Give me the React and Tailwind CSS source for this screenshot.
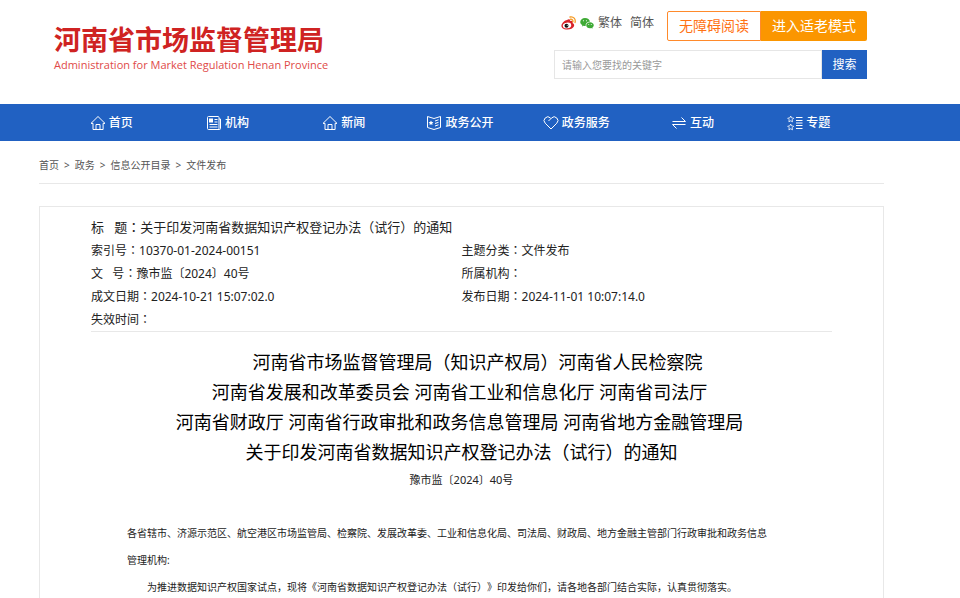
const HomeIcon = () => (
  <svg className="size-4" viewBox="0 0 16 16" fill="none" stroke="currentColor" strokeWidth="1">
    <path d="M1 8.400 8 1.500l7 6.900H13.100v6.100H3V8.400H1Z" strokeLinejoin="round" />
    <path d="M6 14.500V9.500h4v5" />
  </svg>
);

const NewspaperIcon = () => (
  <svg className="size-4" viewBox="0 0 16 16" fill="none" stroke="currentColor" strokeWidth="1">
    <rect x="1.500" y="1.500" width="11.500" height="13" rx="1" />
    <path d="M13 4h1.500v9.500a1 1 0 0 1-1 1H12M8.500 4.500h3M8.500 7h3M3.500 9.500h8M3.500 12h8" />
    <rect x="3.500" y="4" width="3" height="3" fill="currentColor" />
  </svg>
);

const BookIcon = () => (
  <svg className="size-4" viewBox="0 0 16 16" fill="none" stroke="currentColor" strokeWidth="1">
    <path d="M1.500 1.500 8 3.500l6.500-2v11L8 14.500l-6.500-2Z" />
    <path d="M9 6l3.500-1.200M9 8.500l3.500-1.200M9 11l3.500-1.200" />
    <path d="m5 5.500.8 1.500 1.600.2-1.200 1.200.3 1.700L5 9.300l-1.500.8.3-1.700-1.200-1.200L4.200 7Z" fill="currentColor" stroke="none" />
  </svg>
);

const HeartIcon = () => (
  <svg className="size-4" viewBox="0 0 16 16" fill="none" stroke="currentColor" strokeWidth="1">
    <path d="M8 14 2.200 8.200a3.700 3.700 0 0 1 0-5.200 3.700 3.700 0 0 1 5.300 0l.5.5.5-.5a3.700 3.700 0 0 1 5.300 0 3.700 3.700 0 0 1 0 5.200Z" />
    <path d="M8 3.500 5.500 6" />
  </svg>
);

const ArrowsIcon = () => (
  <svg className="size-4" viewBox="0 0 16 16" fill="none" stroke="currentColor" strokeWidth="1">
    <path d="M1.500 6.500h13L10.500 2.500M14.500 9.500h-13l4 4" />
  </svg>
);

const StarListIcon = () => (
  <svg className="size-4" viewBox="0 0 16 16" fill="none" stroke="currentColor" strokeWidth="1">
    <path d="m3.700 1 .9 1.900 2.100.3-1.500 1.500.3 2.100-1.800-1-1.800 1 .3-2.100L.7 3.200l2.100-.3ZM3.700 9l.9 1.900 2.100.3-1.500 1.500.3 2.100-1.800-1-1.800 1 .3-2.100-1.500-1.500 2.100-.3Z" strokeWidth=".8" />
    <path d="M9 2.500h6.500M9 5.500h6.500M9 10.500h6.500M9 13.500h6.500M9 8h6.500" />
  </svg>
);

const WeiboIcon = () => (
  <svg className="h-[14px] w-[15px]" viewBox="0 0 30 28">
    <path d="M12 8c3-2 7-2 6 2 5-1 7 1 5 4 7 3 3 13-10 13C4 27 0 23 1 18c1-4 7-10 11-10Z" fill="#d8232a" />
    <ellipse cx="12" cy="19" rx="8.500" ry="5.800" fill="#fff" transform="rotate(-8 12 19)" />
    <circle cx="11" cy="19.500" r="4" fill="#111" />
    <circle cx="12.500" cy="18.500" r="1" fill="#fff" />
    <path d="M18 2c7-1.500 12 4 10 11M19 6.500c3.500-.5 5.500 2 4.700 5" fill="none" stroke="#f59a23" strokeWidth="2.600" strokeLinecap="round" />
  </svg>
);

const WechatIcon = () => (
  <svg className="h-[14px] w-[14px]" viewBox="0 0 28 28">
    <path d="M10 4c5.500 0 9.500 3.300 9.800 7.500-5.500 0-9.500 4-8.300 8.500-1.500.1-3-.1-4.300-.6L3.800 21l.9-3C2 16.500.5 14.300.5 11.800.5 7.500 4.700 4 10 4Z" fill="#3faa36" />
    <path d="M20 12.500c4.300 0 7.500 2.700 7.500 6 0 2-1.200 3.700-3 4.800l.6 2.200-2.600-1.300c-5.600 1.400-10-1.700-10-5.700 0-3.300 3.300-6 7.500-6Z" fill="#3faa36" />
    <g fill="#fff">
      <circle cx="7" cy="9.500" r="1.200" />
      <circle cx="13" cy="9.500" r="1.200" />
      <circle cx="17.500" cy="17" r="1" />
      <circle cx="22.500" cy="17" r="1" />
    </g>
  </svg>
);

const navItems = [
  { label: "首页", Icon: HomeIcon },
  { label: "机构", Icon: NewspaperIcon },
  { label: "新闻", Icon: HomeIcon },
  { label: "政务公开", Icon: BookIcon },
  { label: "政务服务", Icon: HeartIcon },
  { label: "互动", Icon: ArrowsIcon },
  { label: "专题", Icon: StarListIcon },
];

const crumbs = ["首页", "政务", "信息公开目录", "文件发布"];

const Field = ({ label, children }) => (
  <div className="flex">
    <dt className="whitespace-pre">
      {label}
      <span className="font-['Noto_Sans_CJK_TC',sans-serif] leading-none">：</span>
    </dt>
    <dd>{children}</dd>
  </div>
);

const Header = () => (
  <header className="flex h-[104px] items-start justify-between pl-[54px] pr-[93px]">
    <a href="#" className="mt-5 block text-[#cf2322]">
      <span className="block text-[27px] leading-[39px] font-bold">河南省市场监督管理局</span>
      <span className="block font-['Open_Sans',sans-serif] text-[11px] leading-3 text-[#e04a48]">
        Administration for Market Regulation Henan Province
      </span>
    </a>

    <div className="mt-[11px] w-[313px]">
      <div className="flex items-start justify-between">
        <div className="flex items-center pl-[7px] pt-1 text-xs text-[#555]">
          <a href="#" aria-label="微博"><WeiboIcon /></a>
          <a href="#" aria-label="微信" className="ml-1"><WechatIcon /></a>
          <a href="#" className="ml-1">繁体</a>
          <a href="#" className="ml-2">简体</a>
        </div>
        <div className="flex h-[30px] text-sm">
          <button type="button" className="rounded-l-xs border border-[#ff8a2b] px-[11px] text-[#ff7214]">
            无障碍阅读
          </button>
          <button type="button" className="rounded-r-xs bg-[#fb9600] px-[11px] text-white">
            进入适老模式
          </button>
        </div>
      </div>
      <form className="mt-[9px] flex h-[29px]" onSubmit={(e) => e.preventDefault()}>
        <input
          type="text"
          aria-label="搜索关键字"
          placeholder="请输入您要找的关键字"
          className="min-w-0 flex-1 border border-[#e6e6e6] px-[7px] pt-px text-[10px] outline-none placeholder:text-[#999]"
        />
        <button type="submit" className="w-[45px] bg-[#2161c2] pt-px text-xs text-white">
          搜索
        </button>
      </form>
    </div>
  </header>
);

const Nav = () => (
  <nav className="bg-[#2161c2] pl-[53px] pr-[93px]">
    <ul className="flex h-[37px]">
      {navItems.map(({ label, Icon }) => (
        <li key={label} className="flex-1">
          <a href="#" className="flex h-full items-center justify-center gap-[3px] text-xs font-medium text-white">
            <Icon />
            {label}
          </a>
        </li>
      ))}
    </ul>
  </nav>
);

const App = () => {
  return (
    <div className="h-screen overflow-hidden bg-white font-['Noto_Sans','Noto_Sans_CJK_SC',sans-serif] text-[#222] [text-spacing-trim:space-all]">
      <Header />
      <Nav />

      <main className="pl-[39px] pr-[76px]">
        <ol className="flex gap-[5px] border-b border-[#e8e8e8] pt-4 pb-[10px] text-[10px] leading-4 text-[#555]">
          {crumbs.map((crumb, i) => (
            <li key={crumb} className="flex gap-[5px]">
              {i > 0 && <span>&gt;</span>}
              <a href="#">{crumb}</a>
            </li>
          ))}
        </ol>

        <article className="mt-[22px] border border-[#e8e8e8] px-[51px] pt-2">
          <dl className="grid grid-cols-2 border-b border-[#e8e8e8] text-xs leading-[23px]">
            <div className="col-span-2 text-[13px] leading-6">
              <Field label="标   题">关于印发河南省数据知识产权登记办法（试行）的通知</Field>
            </div>
            <Field label="索引号">10370-01-2024-00151</Field>
            <Field label="主题分类">文件发布</Field>
            <Field label="文   号">豫市监〔2024〕40号</Field>
            <Field label="所属机构" />
            <Field label="成文日期">2024-10-21 15:07:02.0</Field>
            <Field label="发布日期">2024-11-01 10:07:14.0</Field>
            <Field label="失效时间" />
          </dl>

          <h1 className="mt-[15px] text-center text-lg leading-[30px] text-black">
            <span className="block pl-8">河南省市场监督管理局（知识产权局）河南省人民检察院</span>
            <span className="block pr-1">河南省发展和改革委员会 河南省工业和信息化厅 河南省司法厅</span>
            <span className="block pr-1">河南省财政厅 河南省行政审批和政务信息管理局 河南省地方金融管理局</span>
            <span className="block">关于印发河南省数据知识产权登记办法（试行）的通知</span>
          </h1>
          <p className="mt-[3px] text-center text-[11px] leading-5">豫市监〔2024〕40号</p>

          <div className="mt-[30px] px-9 text-[10px] leading-[27px]">
            <p>
              各省辖市、济源示范区、航空港区市场监管局、检察院、发展改革委、工业和信息化局、司法局、财政局、地方金融主管部门行政审批和政务信息
              <br />
              管理机构:
            </p>
            <p className="indent-[2em]">
              为推进数据知识产权国家试点，现将《河南省数据知识产权登记办法（试行）》印发给你们，请各地各部门结合实际，认真贯彻落实。
            </p>
          </div>
        </article>
      </main>
    </div>
  );
};

export default App;
